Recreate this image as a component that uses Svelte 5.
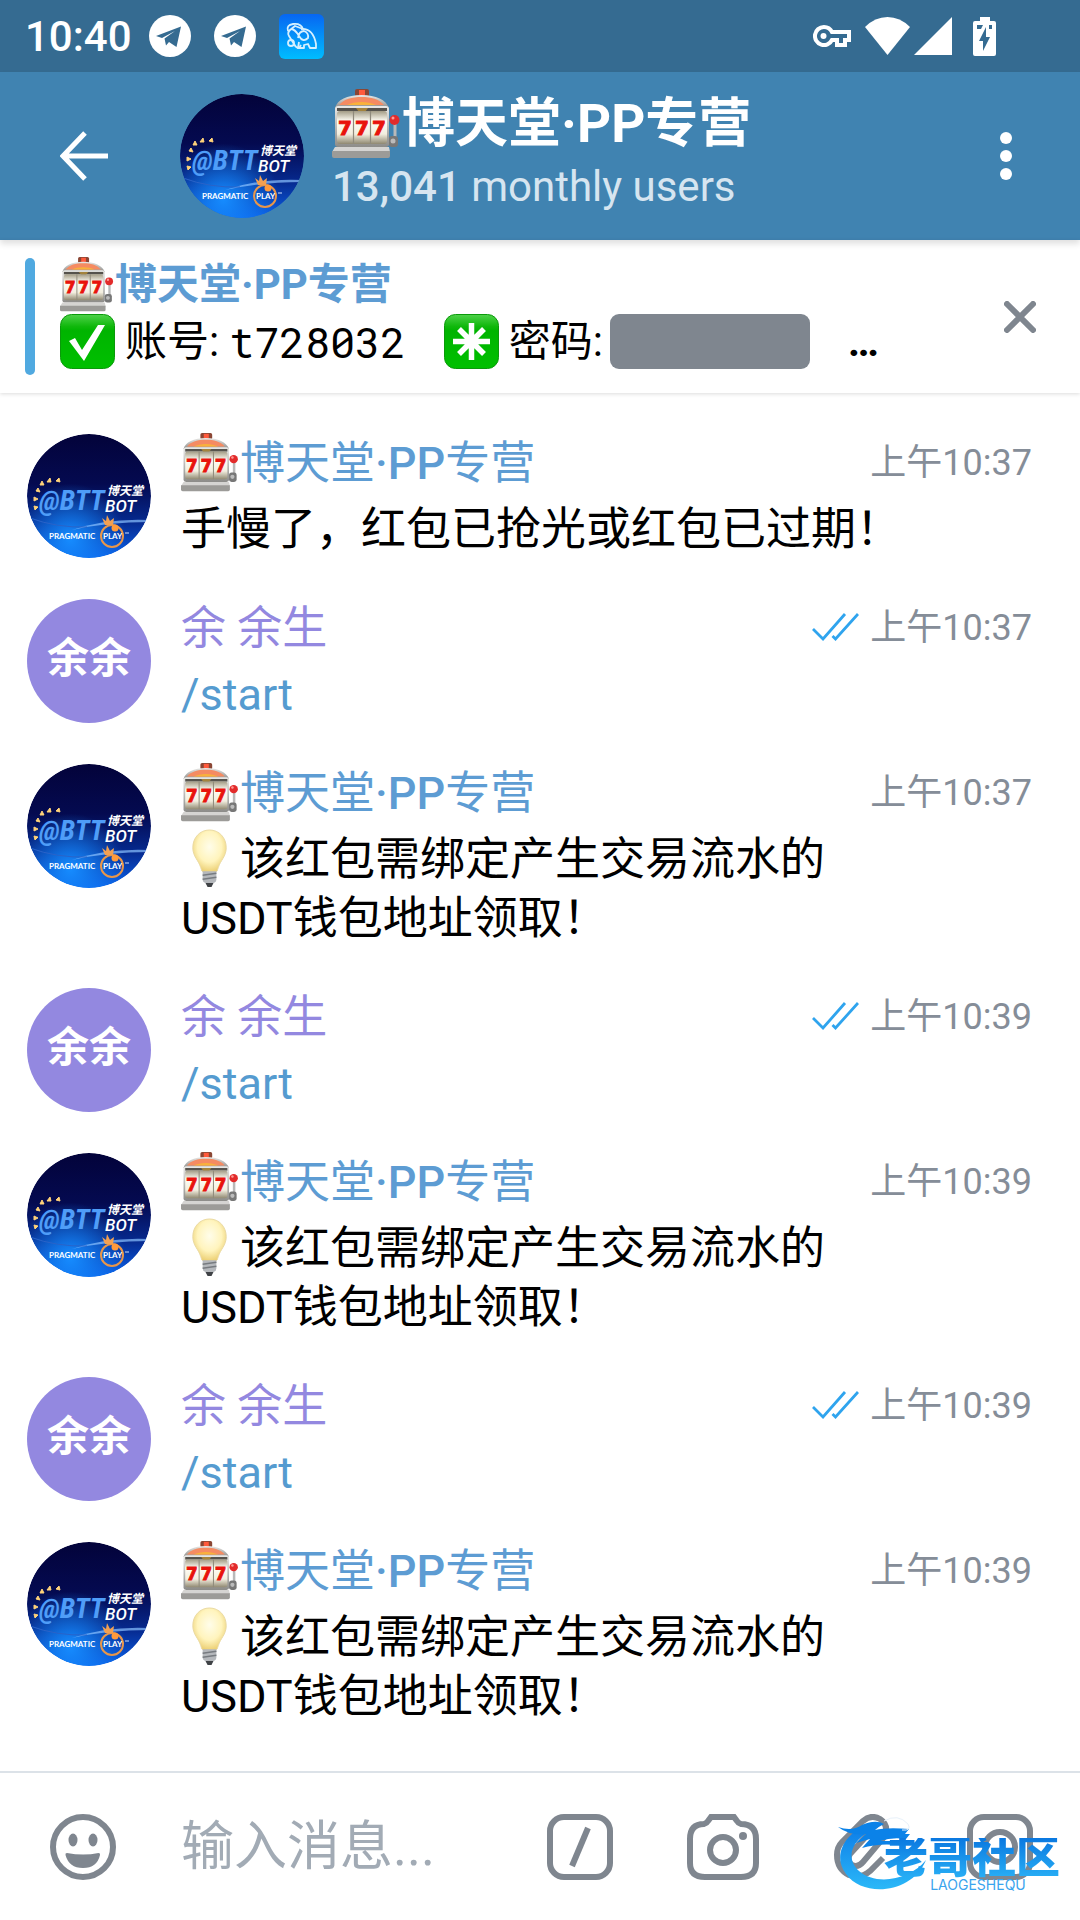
<script lang="ts">
	type Message = {
		from: 'bot' | 'me';
		time: string;
		lines: string[];
		tip?: boolean;
	};

	const botName = '博天堂·PP专营';
	const tipLines = ['该红包需绑定产生交易流水的', 'USDT钱包地址领取！'];

	const messages: Message[] = [
		{ from: 'bot', time: '上午10:37', lines: ['手慢了，红包已抢光或红包已过期！'] },
		{ from: 'me', time: '上午10:37', lines: ['/start'] },
		{ from: 'bot', time: '上午10:37', lines: tipLines, tip: true },
		{ from: 'me', time: '上午10:39', lines: ['/start'] },
		{ from: 'bot', time: '上午10:39', lines: tipLines, tip: true },
		{ from: 'me', time: '上午10:39', lines: ['/start'] },
		{ from: 'bot', time: '上午10:39', lines: tipLines, tip: true }
	];

	let draft = $state('');
	let pinned = $state(true);
</script>

<svelte:head>
	<title>{botName}</title>
</svelte:head>

<!-- gradients shared by every emoji and avatar -->
<svg class="defs" aria-hidden="true">
	<defs>
		<linearGradient id="metal" x1="0" y1="0" x2="0" y2="1">
			<stop offset="0" stop-color="#e9e9e7" />
			<stop offset="1" stop-color="#8d8c89" />
		</linearGradient>
		<linearGradient id="drum" x1="0" y1="0" x2="0" y2="1">
			<stop offset="0" stop-color="#a39c86" />
			<stop offset="0.3" stop-color="#fffdf4" />
			<stop offset="0.7" stop-color="#f3eedf" />
			<stop offset="1" stop-color="#8f8871" />
		</linearGradient>
		<linearGradient id="green" x1="0" y1="0" x2="0" y2="1">
			<stop offset="0" stop-color="#4fd24a" />
			<stop offset="0.22" stop-color="#10b80c" />
			<stop offset="0.3" stop-color="#00b400" />
			<stop offset="1" stop-color="#00c000" />
		</linearGradient>
		<radialGradient id="glass" cx="0.5" cy="0.4" r="0.6">
			<stop offset="0" stop-color="#fffdea" />
			<stop offset="0.6" stop-color="#fff4bd" />
			<stop offset="1" stop-color="#eccf72" />
		</radialGradient>
		<linearGradient id="night" x1="0" y1="0" x2="0" y2="1">
			<stop offset="0" stop-color="#03033a" />
			<stop offset="0.4" stop-color="#040a50" />
			<stop offset="0.7" stop-color="#06288c" />
			<stop offset="1" stop-color="#0a5fe8" />
		</linearGradient>
		<radialGradient id="glow" cx="0.35" cy="0.85" r="0.45">
			<stop offset="0" stop-color="#168cff" />
			<stop offset="1" stop-color="#168cff" stop-opacity="0" />
		</radialGradient>
		<linearGradient id="tile" x1="0" y1="0" x2="0" y2="1">
			<stop offset="0" stop-color="#0766f2" />
			<stop offset="1" stop-color="#00bdff" />
		</linearGradient>
		<linearGradient id="wave" x1="0" y1="0" x2="0" y2="1">
			<stop offset="0" stop-color="#0a78e6" />
			<stop offset="1" stop-color="#2bb8f8" />
		</linearGradient>
	</defs>
</svg>

{#snippet slot()}
	<svg class="emoji" viewBox="0 0 70 70" role="img" aria-label="🎰">
		<rect x="23" y="0" width="14" height="8" rx="2" fill="#8a4634" />
		<rect x="27" y="1" width="6" height="6" fill="#ff5a3c" />
		<path d="M3 19C5 11 15 6 29.500 6S54 11 57 19z" fill="url(#metal)" />
		<path d="M7 16C12 10 20 8 29.500 8S47 10 52 16z" fill="#f58b62" />
		<path d="M15 16c8-4 21-4 29 0z" fill="#f9b23b" />
		<rect x="3" y="17" width="54" height="41" rx="3" fill="url(#metal)" />
		<rect x="5" y="19" width="50" height="3" fill="#55524c" />
		<path d="M24 19h12l-3 4h-6z" fill="#a3833d" />
		<rect x="5" y="22" width="50" height="33" rx="3" fill="url(#drum)" />
		<path d="M21.500 22v33M38.500 22v33" stroke="#8f8a7c" stroke-width="1.200" />
		<g class="sevens">
			<text x="13" y="46">7</text>
			<text x="30" y="46">7</text>
			<text x="47" y="46">7</text>
		</g>
		<path d="M3 58h54l1 5H0z" fill="#d5d4d2" />
		<path d="M0 62h58v5q0 2-2 2H2q-2 0-2-2z" fill="#9c9b98" />
		<path d="M63 33v17" stroke="#b9b9b9" stroke-width="3" />
		<rect x="57" y="47" width="9" height="11" rx="3" fill="#777" />
		<circle cx="61" cy="52" r="2.500" fill="#bbb" />
		<circle cx="62.500" cy="31" r="5" fill="#e22b2b" />
		<circle cx="61" cy="29" r="1.500" fill="#ff9a94" />
	</svg>
{/snippet}

{#snippet bulb()}
	<svg class="emoji" viewBox="0 0 60 60" role="img" aria-label="💡">
		<path
			d="M29 1C19 1 12 9 12 19c0 9 6 13 8 20q1 5 3 5h12q2 0 3-5c2-7 8-11 8-20C46 9 39 1 29 1z"
			fill="url(#glass)"
			stroke="#ead9a2"
		/>
		<path d="M22 43h14v8q0 3-3 4l-2 3h-4l-2-3q-3-1-3-4z" fill="#b5b8bc" />
		<path d="M22 47l14-2M22 51l14-2" stroke="#777b80" stroke-width="1.500" />
		<path d="M25 55h8l-2 4h-4z" fill="#3f4246" />
	</svg>
{/snippet}

{#snippet botAvatar()}
	<svg class="avatar" viewBox="0 0 124 124" role="img" aria-label={botName}>
		<circle cx="62" cy="62" r="62" fill="url(#night)" />
		<circle cx="62" cy="62" r="62" fill="url(#glow)" />
		<path d="M45 96Q80 84 123 86v2Q80 88 45 96z" fill="#8cc2ff" opacity="0.7" />
		<path d="M3 84Q30 94 60 93" fill="none" stroke="#2a63c8" stroke-width="1" />
		<path
			d="M8 76l-1-4 4 1zM7 67v-4l4 2zM9 57l2-3 2 4zM13 51l2-4 2 4zM20 48l3-4 1 4zM29 47l3-3 1 4z"
			fill="#ffd27a"
			stroke="#ffd27a"
		/>
		<text class="btt" x="12" y="76">@BTT</text>
		<text class="hall" x="80" y="61">博天堂</text>
		<text class="bot" x="78" y="78">BOT</text>
		<circle cx="85" cy="102" r="11" fill="none" stroke="#e8964a" stroke-width="2" />
		<circle cx="88" cy="94" r="3.500" fill="#ff9a3c" />
		<path d="M78 91l-3-7 4 3 1-6 3 6 4-3-1 7z" fill="#f2a052" />
		<text class="play" x="22" y="105">PRAGMATIC</text>
		<text class="play" x="76" y="105">PLAY</text>
		<path d="M98 99h4" stroke="#cfe0ff" />
	</svg>
{/snippet}

{#snippet plane()}
	<svg width="42" height="42" viewBox="0 0 42 42" aria-hidden="true">
		<circle cx="21" cy="21" r="21" fill="#fff" />
		<path d="M7 21L32 11.500 27.500 32 20 27l-3 3.500-1.500-7L26 16 13 23z" fill="#356b91" />
	</svg>
{/snippet}

<div class="screen">
	<div class="status">
		<span class="clock">10:40</span>
		<div class="notices">
			{@render plane()}
			{@render plane()}
			<svg width="45" height="45" viewBox="0 0 45 45" aria-hidden="true">
				<rect width="45" height="45" rx="6" fill="url(#tile)" />
				<g fill="none" stroke="#d6f0ff" stroke-width="1.800" stroke-linejoin="round">
					<path d="M9 17q-2-6 5-7 8-1 10 5l-8-3-5 4q-3 3-1 6l5 8q2 4 5 4l2-3" />
					<path d="M22 15q12-1 15 15v4h-6l-2-4-4 1v3h-6l1-6M12 15q4 0 8 7t9 2q1-5-4-7-5 0-6 7" />
					<circle cx="12" cy="29" r="3" />
				</g>
			</svg>
		</div>
		<div class="signals">
			<svg width="38" height="23" viewBox="0 0 38 23" aria-hidden="true">
				<path
					d="M11 2a9 9 0 1 0 8 13h5v5h8v-5h4V7H19a9 9 0 0 0-8-5z"
					fill="none"
					stroke="#fff"
					stroke-width="4"
				/>
				<circle cx="10.500" cy="11" r="3" fill="#fff" />
			</svg>
			<svg class="wifi" width="45" height="38" viewBox="0 0 45 38" aria-hidden="true">
				<path d="M0 10Q10 0 22.500 0T45 10L22.500 38z" fill="#fff" />
			</svg>
			<svg width="38" height="38" viewBox="0 0 38 38" aria-hidden="true">
				<path d="M38 0v38H0z" fill="#fff" />
			</svg>
			<svg class="battery" width="23" height="39" viewBox="0 0 23 39" aria-hidden="true">
				<path d="M7 0h10v4h4q2 0 2 2v31q0 2-2 2H2q-2 0-2-2V6q0-2 2-2h5z" fill="#fff" />
				<path d="M13 10L6 24h4v10l7-14h-4zM4 8h6l-2 4H4zM16 8h3v4h-3z" fill="#356b91" />
			</svg>
		</div>
	</div>

	<header class="topbar">
		<button class="icon back" aria-label="返回">
			<svg width="48" height="50" viewBox="0 0 48 50" aria-hidden="true">
				<path d="M25 2L3 25l22 23M3 25h45" fill="none" stroke="#fff" stroke-width="5" />
			</svg>
		</button>
		{@render botAvatar()}
		<div class="heading">
			<h1>{@render slot()}{botName}</h1>
			<p><b>13,041</b> monthly users</p>
		</div>
		<button class="icon" aria-label="更多">
			<svg width="12" height="48" viewBox="0 0 12 48" fill="#fff" aria-hidden="true">
				<circle cx="6" cy="6" r="6" />
				<circle cx="6" cy="24" r="6" />
				<circle cx="6" cy="42" r="6" />
			</svg>
		</button>
	</header>

	{#if pinned}
		<section class="pinned">
			<div class="marker"></div>
			<div class="pin-body">
				<div class="pin-title">{@render slot()}{botName}</div>
				<div class="pin-text">
					<svg class="emoji" viewBox="0 0 55 55" role="img" aria-label="✅">
						<rect x="0.500" y="0.500" width="54" height="54" rx="11" fill="url(#green)" stroke="#0a9a0a" />
						<path d="M9 27l6-3 7 12L38 11h7L24 47z" fill="#fff" />
					</svg>
					<span class="label">账号:</span>
					<code>t728032</code>
					<svg class="emoji" viewBox="0 0 55 55" role="img" aria-label="✳️">
						<rect x="0.500" y="0.500" width="54" height="54" rx="11" fill="url(#green)" stroke="#0a9a0a" />
						<path
							d="M27.500 9v37M9 27.500h37M15 15l25 25M40 15L15 40"
							stroke="#fff"
							stroke-width="5.500"
						/>
					</svg>
					<span class="label tight">密码:</span>
					<span class="redacted"></span>
					<span class="more">…</span>
				</div>
			</div>
			<button class="icon close" aria-label="关闭" onclick={() => (pinned = false)}>
				<svg width="32" height="32" viewBox="0 0 32 32" aria-hidden="true">
					<path
						d="M3 3l26 26M29 3L3 29"
						stroke="#7f868f"
						stroke-width="6"
						stroke-linecap="round"
					/>
				</svg>
			</button>
		</section>
	{/if}

	<main class="messages">
		{#each messages as message, i (i)}
			<article class="message {message.from}">
				{#if message.from === 'bot'}
					{@render botAvatar()}
				{:else}
					<div class="avatar initials">余余</div>
				{/if}
				<div class="body">
					<div class="meta">
						<span class="name">
							{#if message.from === 'bot'}{@render slot()}<span>博天堂<b>·PP</b>专营</span>{:else}<span>余 余生</span>{/if}
						</span>
						{#if message.from === 'me'}
							<svg class="ticks" width="47" height="28" viewBox="0 0 47 28" aria-label="已读">
								<path
									d="M1 16l10 10L33 1M20.500 23l3 3L46 1"
									fill="none"
									stroke="#2fa4ee"
									stroke-width="2.800"
								/>
							</svg>
						{/if}
						<time>{message.time}</time>
					</div>
					{#each message.lines as line, n}
						<div class="line">
							{#if message.tip && n === 0}{@render bulb()}{/if}{#if message.from === 'me'}<a href="#start">{line}</a>{:else}{line}{/if}
						</div>
					{/each}
				</div>
			</article>
		{/each}
	</main>

	<footer class="composer">
		<button class="icon smile" aria-label="表情">
			<svg width="66" height="66" viewBox="0 0 66 66" aria-hidden="true">
				<circle cx="33" cy="33" r="30" fill="none" stroke="#7f868f" stroke-width="6" />
				<ellipse cx="23" cy="26" rx="4.500" ry="6.500" fill="#7f868f" />
				<ellipse cx="43" cy="26" rx="4.500" ry="6.500" fill="#7f868f" />
				<path d="M17 39q-2 0-1.500 2Q19 54 33 54t17-13q.500-2-1.500-2-15 3-31.500 0z" fill="#7f868f" />
			</svg>
		</button>
		<input bind:value={draft} placeholder="输入消息..." aria-label="输入消息" />
		<div class="tools">
			<button class="icon" aria-label="命令">
				<svg width="66" height="66" viewBox="0 0 66 66" aria-hidden="true">
					<rect x="3" y="3" width="60" height="60" rx="14" />
					<path d="M41 14L25 52" />
				</svg>
			</button>
			<button class="icon" aria-label="相机">
				<svg width="72" height="66" viewBox="0 0 72 66" aria-hidden="true">
					<path
						d="M17 10q3-1 4-3l3-4h23l3 4q1 2 4 3 15 0 15 15v24q0 14-15 14H18Q3 63 3 49V25Q3 10 17 10z"
					/>
					<circle cx="36" cy="36" r="13" />
					<circle class="dot" cx="56" cy="22" r="4" />
				</svg>
			</button>
			<button class="icon" aria-label="附件">
				<svg width="60" height="66" viewBox="0 0 60 66" aria-hidden="true">
					<path
						d="M50 44L37 57Q28 65 16 61 4 55 4 41q0-8 5-13L30 7q8-7 17-2 9 6 5 17L30 48q-5 6-11 3-6-4-2-11l22-24"
					/>
				</svg>
			</button>
			<button class="icon" aria-label="视频消息">
				<svg width="66" height="66" viewBox="0 0 66 66" aria-hidden="true">
					<rect x="3" y="3" width="60" height="60" rx="14" />
					<circle cx="33" cy="33" r="15" />
				</svg>
			</button>
		</div>
		<div class="brand">
			<svg width="90" height="78" viewBox="0 0 90 78" aria-hidden="true">
				<path
					d="M35 8C6 18-6 42 8 60c17 24 66 20 80-14C72 66 38 72 21 57 6 43 14 24 40 13z"
					fill="url(#wave)"
				/>
				<path
					d="M0 13q14 5 24-2 14-6 22-1-6 3-9 6 12-3 34-1l-4 5 5 0-4 5q-14-2-26 2l22 0-4 4q-20-2-36 3l8-9-14 4 10-9Q12 22 0 13z"
					fill="#0b82e8"
				/>
				<path d="M46 7q14-8 24 3 4 7-6 6" fill="none" stroke="#e8f1fa" />
			</svg>
			<div class="brand-text">
				<strong>老哥社区</strong>
				<small>LAOGESHEQU</small>
			</div>
		</div>
	</footer>
</div>

<style>
	:global(body) {
		margin: 0;
		background: #fff;
	}

	.screen {
		display: flex;
		flex-direction: column;
		min-height: 100vh;
		background: #fff;
		color: #000;
		font-family: Roboto, 'Noto Sans CJK SC', sans-serif;
	}

	.defs {
		position: absolute;
		width: 0;
		height: 0;
	}

	svg {
		display: block;
		flex: none;
	}

	.icon {
		display: flex;
		flex: none;
		padding: 0;
		border: 0;
		background: none;
	}

	.emoji {
		width: 59px;
		height: 59px;
	}

	.sevens text {
		fill: #e8130c;
		stroke: #e8130c;
		font-family: 'DejaVu Sans', sans-serif;
		font-size: 20px;
		font-weight: 700;
		text-anchor: middle;
	}

	/* status bar */
	.status {
		display: flex;
		align-items: center;
		height: 72px;
		padding: 0 84px 0 25px;
		background: #356b91;
		color: #fff;
	}

	.clock {
		font-size: 42px;
		font-weight: 500;
	}

	.notices {
		display: flex;
		align-items: center;
		gap: 23px;
		margin-left: 17px;
	}

	.signals {
		display: flex;
		align-items: center;
		margin-left: auto;
	}

	.wifi {
		margin: 0 4px 0 14px;
	}

	.battery {
		margin-left: 21px;
	}

	/* chat header */
	.topbar {
		display: flex;
		align-items: center;
		height: 168px;
		padding: 0 68px 0 60px;
		background: #4083b1;
		color: #fff;
		box-shadow: 0 4px 6px rgba(0, 0, 0, 0.12);
	}

	.back {
		margin-right: 72px;
	}

	.avatar {
		flex: none;
		width: 124px;
		height: 124px;
		border-radius: 50%;
	}

	.avatar text {
		fill: #fff;
		font-weight: 700;
	}

	.avatar .btt {
		fill: #4f9df8;
		font-family: 'Roboto Condensed', 'Liberation Sans Narrow', Roboto, sans-serif;
		font-size: 28px;
		font-style: italic;
	}

	.avatar .hall {
		font-size: 12px;
		font-style: italic;
	}

	.avatar .bot {
		font-size: 17px;
		font-style: italic;
		font-weight: 500;
	}

	.avatar .play {
		font-family: Lato, sans-serif;
		font-size: 8px;
	}

	.heading {
		flex: 1;
		min-width: 0;
		margin-left: 28px;
		padding-bottom: 8px;
	}

	.heading h1 {
		display: flex;
		align-items: center;
		margin: 0;
		font-size: 53px;
		font-weight: 700;
		line-height: 70px;
		white-space: nowrap;
	}

	.heading .emoji {
		width: 70px;
		height: 70px;
	}

	.heading p {
		margin: 0;
		color: #d6e5f0;
		font-size: 42px;
		line-height: 56px;
	}

	.heading b {
		font-weight: 500;
	}

	/* pinned message */
	.pinned {
		display: flex;
		align-items: center;
		height: 153px;
		padding: 0 44px 0 25px;
		box-shadow: 0 1px 4px rgba(0, 0, 0, 0.14);
	}

	.marker {
		flex: none;
		width: 10px;
		height: 117px;
		border-radius: 5px;
		background: #50a9e0;
	}

	.pin-body {
		flex: 1;
		min-width: 0;
		margin-left: 25px;
		padding-bottom: 8px;
		font-size: 42px;
		line-height: 57px;
		white-space: nowrap;
	}

	.pin-body .emoji {
		width: 55px;
		height: 55px;
	}

	.pin-title,
	.pin-text {
		display: flex;
		align-items: center;
	}

	.pin-title {
		color: #5d9cd3;
		font-weight: 700;
	}

	.label {
		margin: 0 10px;
	}

	.label.tight {
		margin-right: 7px;
	}

	code {
		margin-right: 38px;
		font-family: 'Roboto Mono', 'DejaVu Sans Mono', monospace;
		font-size: 42px;
	}

	.redacted {
		width: 200px;
		height: 55px;
		border-radius: 9px;
		background: #7f868f;
	}

	.more {
		margin-left: 38px;
		font-weight: 700;
	}

	/* message list */
	.messages {
		display: flex;
		flex: 1;
		flex-direction: column;
		gap: 41px;
		padding: 41px 48px 41px 27px;
	}

	.message {
		display: flex;
		align-items: flex-start;
		gap: 30px;
	}

	.initials {
		background: #9388e0;
		color: #fff;
		font-size: 42px;
		font-weight: 700;
		line-height: 120px;
		text-align: center;
	}

	.body {
		flex: 1;
		min-width: 0;
		font-size: 45px;
	}

	.meta {
		display: flex;
		align-items: center;
		height: 56px;
		margin-bottom: 9px;
		line-height: 59px;
	}

	.name {
		display: flex;
		align-items: center;
		height: 56px;
		margin-right: auto;
		color: #5d9cd3;
	}

	.name > span {
		height: 56px;
	}

	.name b {
		font-weight: 500;
	}

	.me .name {
		color: #9388e0;
	}

	.ticks {
		margin-right: 11px;
	}

	time {
		height: 56px;
		color: #858d98;
		font-size: 36px;
	}

	.line {
		display: flex;
		align-items: flex-start;
		height: 59px;
		line-height: 61px;
	}

	.line a {
		color: #559bd0;
		text-decoration: none;
	}

	/* composer */
	.composer {
		position: relative;
		display: flex;
		align-items: center;
		height: 147px;
		padding: 0 47px 0 50px;
		border-top: 2px solid #dce2e8;
	}

	.smile {
		margin-right: 65px;
	}

	input {
		flex: 1;
		min-width: 0;
		padding: 0;
		border: 0;
		outline: 0;
		color: #000;
		font: 53px/80px Roboto, 'Noto Sans CJK SC', sans-serif;
	}

	input::placeholder {
		color: #a2abb5;
		opacity: 1;
	}

	.tools {
		display: flex;
		align-items: center;
		gap: 74px;
	}

	.tools svg {
		fill: none;
		stroke: #7f868f;
		stroke-width: 6;
	}

	.tools .dot {
		fill: #7f868f;
		stroke: none;
	}

	/* watermark laid over the composer buttons */
	.brand {
		position: absolute;
		right: 20px;
		bottom: 28px;
		display: flex;
		align-items: flex-end;
		pointer-events: none;
	}

	.brand-text {
		display: flex;
		flex-direction: column;
		align-items: center;
		margin-left: -44px;
	}

	.brand strong {
		background: linear-gradient(#0a78e0, #28aef5);
		background-clip: text;
		color: transparent;
		font-size: 44px;
		font-weight: 900;
		line-height: 40px;
	}

	.brand small {
		margin-left: 12px;
		color: #3aa4ee;
		font-family: Inter, sans-serif;
		font-size: 14px;
		line-height: 14px;
	}
</style>
